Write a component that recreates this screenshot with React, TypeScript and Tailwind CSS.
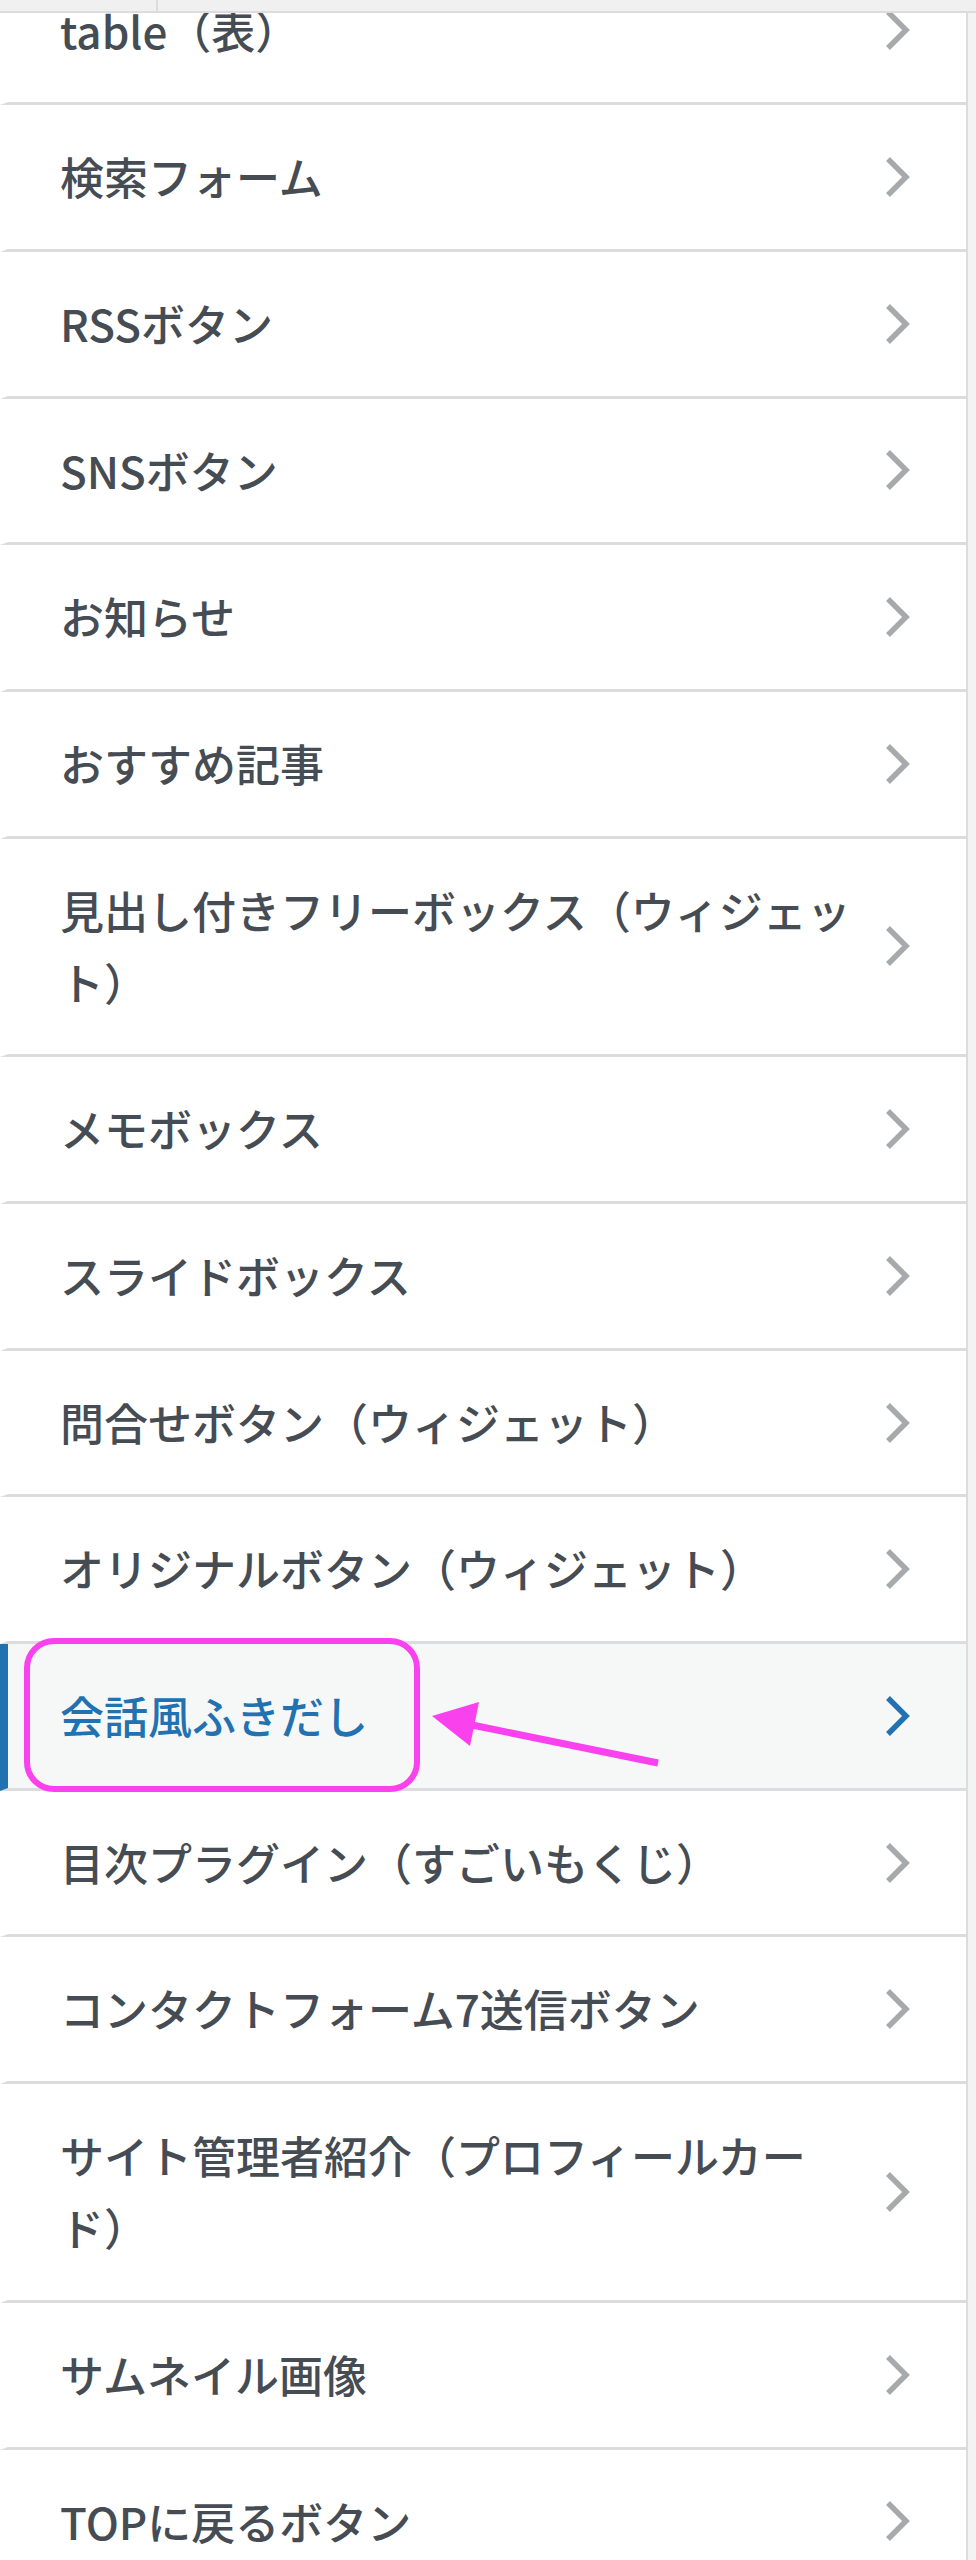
import React from "react";

type Item = { label: string; active?: boolean };

const items: Item[] = [
  { label: "table（表）" },
  { label: "検索フォーム" },
  { label: "RSSボタン" },
  { label: "SNSボタン" },
  { label: "お知らせ" },
  { label: "おすすめ記事" },
  { label: "見出し付きフリーボックス（ウィジェット）" },
  { label: "メモボックス" },
  { label: "スライドボックス" },
  { label: "問合せボタン（ウィジェット）" },
  { label: "オリジナルボタン（ウィジェット）" },
  { label: "会話風ふきだし", active: true },
  { label: "目次プラグイン（すごいもくじ）" },
  { label: "コンタクトフォーム7送信ボタン" },
  { label: "サイト管理者紹介（プロフィールカード）" },
  { label: "サムネイル画像" },
  { label: "TOPに戻るボタン" },
];

function Chevron({ active }: { active?: boolean }) {
  return (
    <svg width="26" height="42" viewBox="0 0 26 42" className="shrink-0 ml-[9px] mr-[56px]">
      <polyline
        points="4,3 22,21 4,39"
        fill="none"
        stroke={active ? "#2271b1" : "#a7aaad"}
        strokeWidth="5.5"
        strokeLinejoin="miter"
        strokeLinecap="butt"
      />
    </svg>
  );
}

function Row({ item }: { item: Item }) {
  return (
    <div
      className={
        item.active
          ? "flex items-center border-l-[8px] border-l-[#2271b1] border-b-[3px] border-b-[#dcdcde] bg-[#f6f7f7]"
          : "flex items-center border-l-[8px] border-l-white border-b-[3px] border-b-[#dcdcde] bg-white"
      }
    >
      <div
        className={
          item.active
            ? "flex-1 pl-[52px] pr-[12px] pt-[35px] pb-[36.7px] text-[44px] leading-[72px] font-medium text-[#2271b1]"
            : "flex-1 pl-[52px] pr-[12px] pt-[35px] pb-[36.7px] text-[44px] leading-[72px] font-medium text-[#464c53]"
        }
      >
        {item.label}
      </div>
      <Chevron active={item.active} />
    </div>
  );
}

export default function App() {
  return (
    <div
      className="relative h-[2560px] w-[976px] overflow-hidden bg-[#f3f3f4]"
      style={{ fontFamily: '"Noto Sans CJK JP", "Noto Sans", sans-serif' }}
    >
      <div className="flex h-[13px] border-b-[2px] border-b-[#dcdcde] bg-[#f0f0f1]">
        <div className="w-[158px] border-r-[2px] border-r-[#dcdcde]" />
        <div className="flex-1" />
      </div>
      <div className="h-[2547px] w-[968px] overflow-hidden border-r-[2px] border-r-[#dcdcde] bg-white">
        <div className="mt-[-54.5px]">
          {items.map((it) => (
            <Row key={it.label} item={it} />
          ))}
        </div>
      </div>

      <div className="absolute left-[24px] top-[1638px] h-[154px] w-[396px] rounded-[30px] border-[6px] border-[#fa41ee]" />
      <svg
        className="absolute left-[420px] top-[1690px]"
        width="250"
        height="90"
        viewBox="0 0 250 90"
      >
        <line x1="52" y1="35" x2="238" y2="73" stroke="#fa41ee" strokeWidth="7" />
        <polygon points="12,26 59,12 50,56" fill="#fa41ee" />
      </svg>
    </div>
  );
}
